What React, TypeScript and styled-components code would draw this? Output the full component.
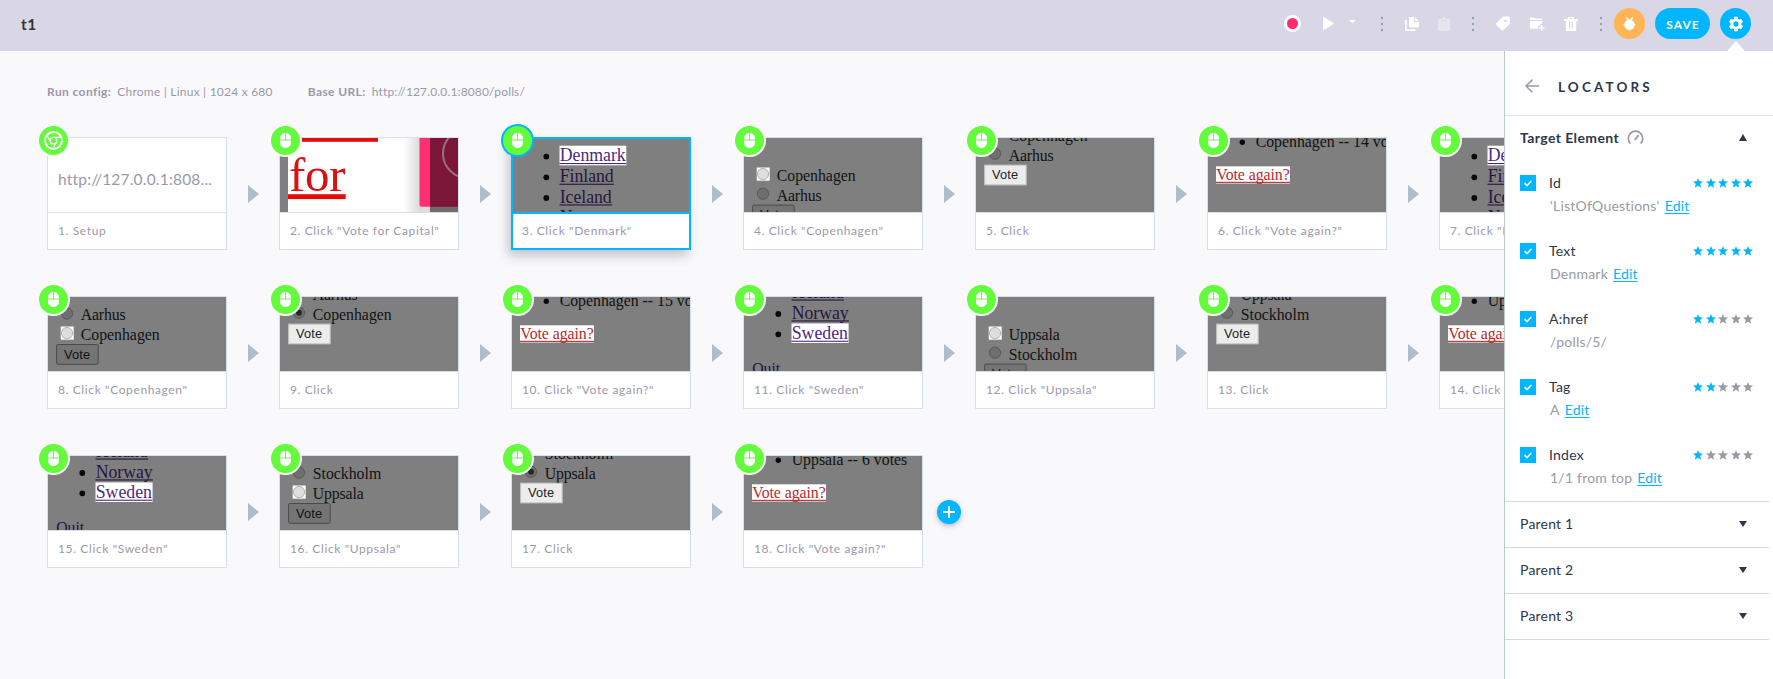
import React from "react";
import styled, { createGlobalStyle, css } from "styled-components";
import { MdSettings } from "react-icons/md";

const c = {
  bar: "#d9d7e5",
  page: "#f9f9fc",
  blue: "#00b6ff",
  green: "#63fb3b",
  line: "#d5e0e8",
  muted: "#9b98a9",
  ink: "#2c374b",
  arrow: "#adbeca",
  shade: "#7f7f7f",
};

const GlobalStyle = createGlobalStyle`
  * { box-sizing: border-box; }
  body { margin: 0; background: ${c.page}; font-family: Lato, "Open Sans", sans-serif; overflow: hidden; }
`;

const Screen = styled.div`
  display: flex;
  flex-direction: column;
  height: 679px;
  background: ${c.page};
`;

/* ---------- top bar ---------- */

const TopBar = styled.header`
  display: flex;
  align-items: center;
  flex: none;
  height: 51px;
  padding: 0 22px 4px 21px;
  background: ${c.bar};
`;

const TestName = styled.h1`
  margin: 0 auto 0 0;
  font-size: 15.5px;
  line-height: 20px;
  font-weight: 700;
  letter-spacing: 0.6px;
  color: #333;
`;

const Tool = styled.span<{ $gap: number }>`
  display: flex;
  flex: none;
  margin-left: ${(p) => p.$gap}px;
`;

const RecordDot = styled.span`
  width: 17px;
  height: 17px;
  border: 3px solid #fff;
  border-radius: 50%;
  background: #ff2d70;
`;

const Dots = styled.span`
  display: flex;
  flex-direction: column;
  gap: 4px;
  padding-top: 1px;
  i {
    width: 2px;
    height: 2px;
    background: #8f9fae;
  }
`;

const RoundButton = styled.button<{ $color: string }>`
  position: relative;
  display: flex;
  align-items: center;
  justify-content: center;
  width: 31px;
  height: 31px;
  padding: 0;
  border: 0;
  border-radius: 50%;
  background: ${(p) => p.$color};
  color: #fff;
`;

const SaveButton = styled.button`
  width: 55px;
  height: 31px;
  padding: 1px 0 0 1px;
  border: 0;
  border-radius: 16px;
  background: ${c.blue};
  color: #fff;
  font: 700 12px Lato, sans-serif;
  letter-spacing: 1.1px;
`;

const Pointer = styled.span`
  position: absolute;
  top: 33px;
  left: 7px;
  border: 9px solid transparent;
  border-top: 0;
  border-bottom: 10px solid #fff;
`;

/* ---------- workspace ---------- */

const Body = styled.div`
  display: flex;
  flex: 1;
  min-height: 0;
`;

const Workspace = styled.main`
  flex: 1;
  min-width: 0;
  overflow: hidden;
  padding: 32px 0 0 47px;
`;

const Meta = styled.div`
  display: flex;
  height: 54px;
  font-size: 12px;
  line-height: 18px;
  color: ${c.muted};
`;

const MetaItem = styled.div<{ $spacing: number }>`
  margin-right: 35px;
  letter-spacing: ${(p) => p.$spacing}px;
  white-space: nowrap;
  b {
    margin-right: 6px;
    letter-spacing: 0.4px;
  }
`;

const StepRow = styled.div`
  display: flex;
  width: max-content;
  height: 113px;
  margin-bottom: 46px;
`;

const StepCard = styled.article<{ $selected?: boolean }>`
  position: relative;
  width: 180px;
  height: 113px;
  border: 1px solid ${c.line};
  background: #fff;
  ${(p) =>
    p.$selected &&
    css`
      border: 2px solid ${c.blue};
      box-shadow: -3px 6px 10px rgba(60, 60, 90, 0.28);
    `}
`;

const Badge = styled.span<{ $selected?: boolean }>`
  position: absolute;
  top: ${(p) => (p.$selected ? -15 : -14)}px;
  left: ${(p) => (p.$selected ? -12 : -11)}px;
  display: flex;
  align-items: center;
  justify-content: center;
  width: 33px;
  height: 33px;
  border: 2px solid ${(p) => (p.$selected ? c.blue : c.page)};
  border-radius: 50%;
  background: ${c.green};
`;

const Preview = styled.div<{ $selected?: boolean }>`
  display: flex;
  align-items: flex-start;
  overflow: hidden;
  height: 75px;
  border-bottom: ${(p) => (p.$selected ? `2px solid ${c.blue}` : `1px solid ${c.line}`)};
  svg {
    flex: none;
    margin: ${(p) => (p.$selected ? "-1px" : "0")};
  }
`;

const SetupUrl = styled.span`
  padding: 31px 0 0 10px;
  font-size: 15.5px;
  line-height: 20px;
  letter-spacing: 0.2px;
  color: ${c.muted};
  white-space: nowrap;
`;

const Caption = styled.div<{ $selected?: boolean }>`
  padding-left: ${(p) => (p.$selected ? 9 : 10)}px;
  font-size: 12px;
  line-height: ${(p) => (p.$selected ? 34 : 36)}px;
  letter-spacing: 0.62px;
  color: ${c.muted};
  white-space: nowrap;
`;

const Connector = styled.div`
  display: flex;
  align-items: center;
  justify-content: center;
  width: 52px;
  padding-top: 1px;
`;

const Triangle = styled.span`
  border: 9.5px solid transparent;
  border-left: 11px solid ${c.arrow};
  border-right: 0;
`;

const AddStep = styled.button`
  display: flex;
  align-items: center;
  justify-content: center;
  width: 24px;
  height: 24px;
  padding: 0;
  border: 0;
  border-radius: 50%;
  background: ${c.blue};
  box-shadow: 0 2px 5px rgba(60, 60, 90, 0.35);
`;

/* ---------- miniature page captures ---------- */

const Shot = styled.svg`
  display: block;
  font-family: "Liberation Serif", serif;
  font-size: 16px;
`;

const ButtonLabel = styled.text`
  font-family: "Liberation Sans", sans-serif;
  font-size: 12.8px;
`;

const Canvas = ({ children }: { children: React.ReactNode }) => (
  <Shot width="178" height="74" viewBox="0 0 178 74">
    <rect width="178" height="74" fill={c.shade} />
    {children}
  </Shot>
);

const Words = (p: { x: number; y: number; w?: number; size?: number; fill?: string; children: string }) => (
  <text x={p.x} y={p.y} fontSize={p.size ?? 15.8} fill={p.fill ?? "#121212"} textLength={p.w}>
    {p.children}
  </text>
);

const Link = (p: { y: number; w: number; hot?: boolean; children: string }) => (
  <g>
    <circle cx="34.3" cy={p.y - 4.8} r="2.9" fill="#080808" />
    {p.hot && <rect x="47.5" y={p.y - 15.7} width={p.w + 0.8} height="19.6" fill="#fff" />}
    <Words x={47.7} y={p.y} w={p.w} size={17.8} fill={p.hot ? "#4d2a80" : "#271540"}>
      {p.children}
    </Words>
    <rect x="47.5" y={p.y + 1.6} width={p.w + 0.5} height="1.1" fill={p.hot ? "#4d2a80" : "#271540"} />
  </g>
);

const Radio = (p: { y: number; hot?: boolean; on?: boolean }) => (
  <g>
    {p.hot && <rect x="12.7" y={p.y - 6.6} width="13" height="13.2" fill="#fff" />}
    <circle cx="19" cy={p.y} r="5.6" fill={p.hot ? "#dedede" : "#6f6f6f"} stroke={p.hot ? "#b2b2b2" : "#575757"} />
    {p.on && <circle cx="19" cy={p.y} r="2.9" fill="#262626" />}
  </g>
);

const VoteButton = (p: { y: number; hot?: boolean }) => (
  <g>
    <rect
      x="8.6"
      y={p.y}
      width="41.6"
      height="19.8"
      rx={p.hot ? 0 : 1.5}
      fill={p.hot ? "#ececec" : "#747474"}
      stroke={p.hot ? "#c2c2c2" : "#4a4a4a"}
    />
    <ButtonLabel x="16" y={p.y + 14.3} textLength="26" fill={p.hot ? "#222" : "#111"}>
      Vote
    </ButtonLabel>
  </g>
);

const widths: Record<string, number> = { Copenhagen: 79, Aarhus: 45, Uppsala: 51, Stockholm: 68.5 };

const ListTop = () => (
  <Canvas>
    <Link y={23.4} w={66} hot>Denmark</Link>
    <Link y={44.1} w={54}>Finland</Link>
    <Link y={64.8} w={52}>Iceland</Link>
    <Link y={85} w={57}>Norway</Link>
  </Canvas>
);

const ListEnd = () => (
  <Canvas>
    <Link y={0.9} w={52}>Iceland</Link>
    <Link y={21.8} w={57}>Norway</Link>
    <Link y={42.1} w={56.3} hot>Sweden</Link>
    <Words x={8.3} y={76.7} w={27.8} fill="#271540">Quit</Words>
  </Canvas>
);

/* offset: baseline of the first choice; pick: the highlighted choice */
const Choices = (p: { names: string[]; offset: number; pick?: number; checked?: number; hotButton?: boolean }) => (
  <Canvas>
    {p.names.map((name, i) => {
      const y = p.offset + i * 19.6;
      return (
        <g key={name}>
          <Radio y={y - 6.9} hot={p.pick === i} on={p.checked === i} />
          <Words x={32.7} y={y} w={widths[name]}>{name}</Words>
        </g>
      );
    })}
    <VoteButton y={p.offset + 19.6 * p.names.length - 15.1} hot={p.hotButton} />
  </Canvas>
);

const Result = (p: { text: string; w?: number }) => (
  <Canvas>
    <circle cx="34.3" cy="4.3" r="2.7" fill="#080808" />
    <Words x={47.7} y={8.8} w={p.w}>{p.text}</Words>
    <rect x="8" y="28.3" width="74" height="17.2" fill="#fff" />
    <Words x={8.3} y={42.4} w={73.4} fill="#b8282c">Vote again?</Words>
    <rect x="8" y="43.8" width="74" height="1.1" fill="#b8282c" />
  </Canvas>
);

const CapitalShot = () => (
  <Shot width="178" height="74" viewBox="0 0 178 74">
    <defs>
      <linearGradient id="edge">
        <stop offset="0" stopColor="#fefefe" />
        <stop offset="1" stopColor="#dadada" />
      </linearGradient>
    </defs>
    <rect width="178" height="74" fill="#fefefe" />
    <rect width="8" height="74" fill={c.shade} />
    <rect x="8" width="90" height="3.8" fill="#e60a0a" />
    <Words x={9} y={52.8} w={56.5} size={49} fill="#d81212">for</Words>
    <rect x="8" y="56.2" width="57.7" height="4.9" fill="#e60a0a" />
    <rect x="124" width="16" height="74" fill="url(#edge)" />
    <rect x="139" y="68" width="39" height="6" fill="#dcdcdc" />
    <rect x="150" y="60" width="28" height="14" fill="#6c6c6c" />
    <rect x="139.5" y="-5" width="60" height="73.8" rx="2" fill="#ff2f74" />
    <rect x="150" width="28" height="68.8" fill="#7c1638" />
    <circle cx="187.5" cy="15.5" r="24.5" fill="none" stroke="#98707f" strokeWidth="2" />
  </Shot>
);

/* ---------- icons ---------- */

const MouseIcon = () => (
  <svg width="11" height="15" viewBox="0 0 11 15" fill="#fff">
    <path d="M5 0A5 5.5 0 0 0 0 6.4H5ZM6 0V6.4H11A5 5.5 0 0 0 6 0ZM0 7.4H11V9.5A5.5 5.5 0 0 1 0 9.5Z" />
  </svg>
);

const ChromeIcon = () => (
  <svg width="19" height="19" viewBox="0 0 19 19" fill="none" stroke="#fff">
    <circle cx="9.5" cy="9.5" r="8.5" strokeWidth="1.9" />
    <circle cx="9.5" cy="9.7" r="3.3" strokeWidth="1.2" />
    <path d="M9 6.3H17M6.8 11.5 3 4.5M12.2 11.6 9.2 17.5" strokeWidth="1.2" />
  </svg>
);

const BugIcon = () => (
  <svg width="13" height="14" viewBox="0 0 13 14" fill="#fff">
    <path d="M3.9 3.6Q4.4 2.2 6.5 2.2T9.1 3.6L11.2 4.9 11.1 6.2 12.4 7.2V8.4L11.2 9.1 11.1 10.8 9.4 12 6.5 13.8 3.6 12 1.9 10.8 1.8 9.1.6 8.4V7.2L1.9 6.2 1.8 4.9Z" />
    <path d="M3.3.5 5.2 3M9.7.5 7.8 3" stroke="#fff" strokeWidth="1.4" />
  </svg>
);

const CopyIcon = () => (
  <svg width="14" height="14" viewBox="0 0 14 14" fill="#fff">
    <path d="M0 3H1.7V12.3H10.5V14H1Q0 14 0 13ZM4 0H9V5H14V9.6Q14 10.6 13 10.6H5Q4 10.6 4 9.6ZM10 0 14 4H10Z" />
  </svg>
);

const PasteIcon = () => (
  <svg width="12" height="14" viewBox="0 0 12 14" fill="#e7e6ee">
    <path d="M1 2H3.6V4.4H8.4V2H11Q12 2 12 3V13Q12 14 11 14H1Q0 14 0 13V3Q0 2 1 2ZM4.5 1.2Q6-1 7.5 1.2V3.5H4.5Z" />
  </svg>
);

const TagIcon = () => (
  <svg width="14" height="15" viewBox="0 0 14 15" fill="#fff" fillRule="evenodd">
    <path d="M6.2 1.3Q6.9.6 8 .6H12Q14 .6 14 2.6V6.4Q14 7.6 13.2 8.4L7.6 13.8Q6.4 15 5.1 13.8L.7 9.6Q-.5 8.4.6 7.1ZM9.2 3.6a1.3 1.3 0 1 0 .1 0Z" />
  </svg>
);

const FolderIcon = () => (
  <svg width="15" height="14" viewBox="0 0 15 14" fill="#fff">
    <path d="M0 1Q0 .4.6.4H4.2L5.4 1.6H12V3H0ZM0 4H12.4L12.2 6.8H10.2V9H8V11.8H1Q0 11.8 0 10.8ZM11 8H12.3V10.2H14.5V11.5H12.3V13.8H11V11.5H8.8V10.2H11Z" />
  </svg>
);

const TrashIcon = () => (
  <svg width="14" height="14" viewBox="0 0 14 14" fill="#fff" fillRule="evenodd">
    <path d="M3.8 2V1Q3.8 0 4.8 0H9.2Q10.2 0 10.2 1V2H14V4H12.2V13Q12.2 14 11.2 14H2.8Q1.8 14 1.8 13V4H0V2ZM5.3 2H8.7V1.3H5.3ZM5 4.6V11.4H6.2V4.6ZM7.8 4.6V11.4H9V4.6Z" />
  </svg>
);

const GaugeIcon = () => (
  <svg width="17" height="15" viewBox="0 0 17 15" fill="none" stroke="#9b98a9">
    <path d="M3.4 13.5A7.2 7.2 0 1 1 13.6 13.5" strokeWidth="1.7" />
    <path d="M7.8 10 11.6 5.2" strokeWidth="2" />
  </svg>
);

const BackIcon = () => (
  <svg width="14" height="14" viewBox="0 0 14 14" fill="none" stroke="#9b98a9" strokeWidth="1.5">
    <path d="M14 7H1.2M7.4.6 1 7 7.4 13.4" />
  </svg>
);

/* ---------- locators panel ---------- */

const Panel = styled.aside`
  flex: none;
  width: 269px;
  border-left: 1px solid #bcc6d2;
  background: #fff;
  color: ${c.ink};
`;

const PanelHead = styled.div`
  display: flex;
  align-items: center;
  gap: 19px;
  height: 65px;
  padding: 6px 0 0 20px;
  border-bottom: 1px solid #e2e3ea;
  svg {
    flex: none;
  }
`;

const PanelTitle = styled.h2`
  margin: 1px 0 0;
  font-size: 13.5px;
  font-weight: 700;
  letter-spacing: 3.15px;
`;

const SectionHead = styled.div`
  display: flex;
  align-items: center;
  height: 45px;
  padding: 0 26px 2px 15px;
  font-size: 14px;
  font-weight: 700;
  letter-spacing: 0.4px;
  svg {
    margin-left: 8px;
  }
`;

const Caret = styled.span<{ $up?: boolean }>`
  margin-left: auto;
  border: 4.5px solid transparent;
  ${(p) => (p.$up ? "border-top: 0; border-bottom: 7px solid" : "border-bottom: 0; border-top: 6px solid")} ${c.ink};
`;

const LocatorItem = styled.div`
  display: grid;
  grid-template-columns: 29px 1fr 61px;
  grid-template-rows: 22px 25px;
  align-items: center;
  height: 68px;
  padding: 11px 15px 0 15px;
  font-size: 14px;
  letter-spacing: 0.22px;
`;

const LocatorName = styled.span`
  padding-bottom: 2px;
`;

const Check = styled.span`
  display: flex;
  align-items: center;
  justify-content: center;
  width: 16px;
  height: 16px;
  background: ${c.blue};
`;

const Stars = styled.span`
  display: flex;
  gap: 2.6px;
`;

const LocatorValue = styled.span`
  grid-column: 2 / 4;
  padding: 0 0 2px 1px;
  color: #989ba5;
  white-space: nowrap;
  a {
    margin-left: 5px;
    color: ${c.blue};
    letter-spacing: 0.15px;
    text-decoration: underline;
    text-underline-offset: 2px;
  }
`;

const ItemsList = styled.div`
  height: 340px;
  width: 264px;
`;

const ParentRow = styled.div`
  display: flex;
  align-items: center;
  width: 264px;
  height: 46px;
  padding: 0 22px 2px 15px;
  border-top: 1px solid #d9d7e5;
  font-size: 14px;
  letter-spacing: 0.2px;
  &:last-child {
    height: 47px;
    border-bottom: 1px solid #d9d7e5;
  }
`;

const Star = ({ on }: { on: boolean }) => (
  <svg width="10" height="10" viewBox="0 0 10 10" fill={on ? c.blue : "#989ba5"}>
    <path d="M5 0 6.3 3.3 10 3.5 7.2 5.9 8.2 9.8 5 7.7 1.8 9.8 2.8 5.9 0 3.5 3.7 3.3Z" />
  </svg>
);

const locators = [
  { name: "Id", value: "'ListOfQuestions'", rating: 5, edit: true },
  { name: "Text", value: "Denmark", rating: 5, edit: true },
  { name: "A:href", value: "/polls/5/", rating: 2, edit: false },
  { name: "Tag", value: "A", rating: 2, edit: true },
  { name: "Index", value: "1/1 from top", rating: 1, edit: true },
];

type StepData = { caption: string; preview: React.ReactNode; setup?: boolean; selected?: boolean };

const rows: StepData[][] = [
  [
    { caption: "1. Setup", preview: <SetupUrl>http://127.0.0.1:808...</SetupUrl>, setup: true },
    { caption: '2. Click "Vote for Capital"', preview: <CapitalShot /> },
    { caption: '3. Click "Denmark"', preview: <ListTop />, selected: true },
    { caption: '4. Click "Copenhagen"', preview: <Choices names={["Copenhagen", "Aarhus"]} offset={43} pick={0} /> },
    { caption: "5. Click", preview: <Choices names={["Copenhagen", "Aarhus"]} offset={3} hotButton /> },
    { caption: '6. Click "Vote again?"', preview: <Result text="Copenhagen -- 14 votes" /> },
    { caption: '7. Click "Denmark"', preview: <ListTop /> },
  ],
  [
    { caption: '8. Click "Copenhagen"', preview: <Choices names={["Aarhus", "Copenhagen"]} offset={23.4} pick={1} /> },
    { caption: "9. Click", preview: <Choices names={["Aarhus", "Copenhagen"]} offset={3} checked={1} hotButton /> },
    { caption: '10. Click "Vote again?"', preview: <Result text="Copenhagen -- 15 votes" /> },
    { caption: '11. Click "Sweden"', preview: <ListEnd /> },
    { caption: '12. Click "Uppsala"', preview: <Choices names={["Uppsala", "Stockholm"]} offset={43} pick={0} /> },
    { caption: "13. Click", preview: <Choices names={["Uppsala", "Stockholm"]} offset={3} hotButton /> },
    { caption: '14. Click "Vote again?"', preview: <Result text="Uppsala -- 5 votes" /> },
  ],
  [
    { caption: '15. Click "Sweden"', preview: <ListEnd /> },
    { caption: '16. Click "Uppsala"', preview: <Choices names={["Stockholm", "Uppsala"]} offset={23.4} pick={1} /> },
    { caption: "17. Click", preview: <Choices names={["Stockholm", "Uppsala"]} offset={3} checked={1} hotButton /> },
    { caption: '18. Click "Vote again?"', preview: <Result text="Uppsala -- 6 votes" w={115.5} /> },
  ],
];

const Step = ({ step }: { step: StepData }) => (
  <StepCard $selected={step.selected}>
    <Preview $selected={step.selected}>{step.preview}</Preview>
    <Caption $selected={step.selected}>{step.caption}</Caption>
    <Badge $selected={step.selected}>{step.setup ? <ChromeIcon /> : <MouseIcon />}</Badge>
  </StepCard>
);

const Separator = () => (
  <Dots>
    <i />
    <i />
    <i />
  </Dots>
);

export default function App() {
  return (
    <Screen>
      <GlobalStyle />
      <TopBar>
        <TestName>t1</TestName>
        <Tool $gap={0}><RecordDot /></Tool>
        <Tool $gap={22}>
          <svg width="11" height="13" viewBox="0 0 11 13" fill="#fff"><path d="M0 .7Q.2-.2 1 .2L10.4 5.8Q11.2 6.5 10.4 7.2L1 12.8Q.2 13.1 0 12.3Z" /></svg>
        </Tool>
        <Tool $gap={15}>
          <svg width="7" height="7" viewBox="0 0 7 7" fill="#fff"><path d="M0 0H7L3.5 3.3Z" /></svg>
        </Tool>
        <Tool $gap={25}><Separator /></Tool>
        <Tool $gap={22}><CopyIcon /></Tool>
        <Tool $gap={19}><PasteIcon /></Tool>
        <Tool $gap={22}><Separator /></Tool>
        <Tool $gap={22}><TagIcon /></Tool>
        <Tool $gap={20}><FolderIcon /></Tool>
        <Tool $gap={19}><TrashIcon /></Tool>
        <Tool $gap={22}><Separator /></Tool>
        <Tool $gap={12}><RoundButton $color="#ffb455"><BugIcon /></RoundButton></Tool>
        <Tool $gap={10}><SaveButton>SAVE</SaveButton></Tool>
        <Tool $gap={10}>
          <RoundButton $color={c.blue}>
            <MdSettings size={18} />
            <Pointer />
          </RoundButton>
        </Tool>
      </TopBar>
      <Body>
        <Workspace>
          <Meta>
            <MetaItem $spacing={0.22}><b>Run config:</b>Chrome | Linux | 1024 x 680</MetaItem>
            <MetaItem $spacing={0.15}><b>Base URL:</b>http://127.0.0.1:8080/polls/</MetaItem>
          </Meta>
          {rows.map((row, r) => (
            <StepRow key={r}>
              {row.map((step, i) => (
                <React.Fragment key={step.caption}>
                  <Step step={step} />
                  <Connector>
                    {r === rows.length - 1 && i === row.length - 1 ? (
                      <AddStep aria-label="Add step">
                        <svg width="12" height="12" viewBox="0 0 12 12" stroke="#fff" strokeWidth="2"><path d="M6 0V12M0 6H12" /></svg>
                      </AddStep>
                    ) : (
                      <Triangle />
                    )}
                  </Connector>
                </React.Fragment>
              ))}
            </StepRow>
          ))}
        </Workspace>
        <Panel>
          <PanelHead>
            <BackIcon />
            <PanelTitle>LOCATORS</PanelTitle>
          </PanelHead>
          <SectionHead>
            Target Element
            <GaugeIcon />
            <Caret $up />
          </SectionHead>
          <ItemsList>
            {locators.map((l) => (
              <LocatorItem key={l.name}>
                <Check>
                  <svg width="8" height="7" viewBox="0 0 8 7" fill="none" stroke="#fff" strokeWidth="1.7"><path d="M.6 3.2 3 5.5 7.4 1" /></svg>
                </Check>
                <LocatorName>{l.name}</LocatorName>
                <Stars>{[1, 2, 3, 4, 5].map((n) => <Star key={n} on={n <= l.rating} />)}</Stars>
                <LocatorValue>
                  {l.value}
                  {l.edit && <a>Edit</a>}
                </LocatorValue>
              </LocatorItem>
            ))}
          </ItemsList>
          <ParentRow>Parent 1<Caret /></ParentRow>
          <ParentRow>Parent 2<Caret /></ParentRow>
          <ParentRow>Parent 3<Caret /></ParentRow>
        </Panel>
      </Body>
    </Screen>
  );
}
